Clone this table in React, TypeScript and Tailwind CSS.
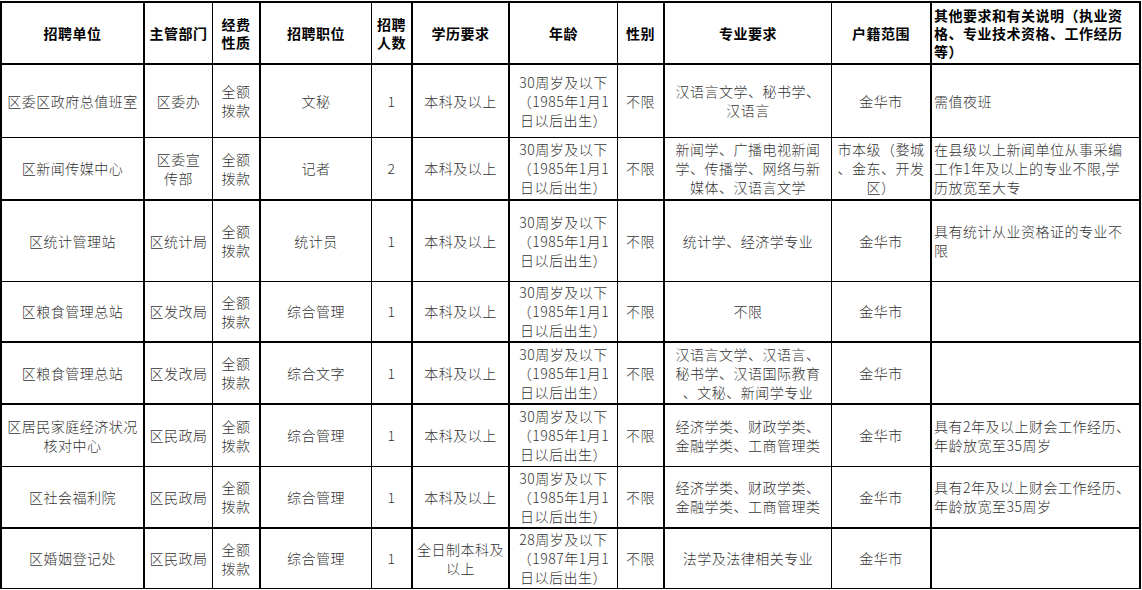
import React from "react";

// column / row border weights, taken from the sheet's grid lines
const colBorder = [
  "border-r-2",
  "border-r",
  "border-r-2",
  "border-r",
  "border-r-2",
  "border-r-2",
  "border-r",
  "border-r-2",
  "border-r",
  "border-r-2",
  "border-r-2",
];
const rowBorder = [
  "border-b-2",
  "border-b",
  "border-b-2",
  "border-b",
  "border-b-2",
  "border-b-2",
  "border-b",
  "border-b-2",
  "border-b",
];

const headers = [
  "招聘单位",
  "主管部门",
  "经费\n性质",
  "招聘职位",
  "招聘\n人数",
  "学历要求",
  "年龄",
  "性别",
  "专业要求",
  "户籍范围",
  "其他要求和有关说明（执业资\n格、专业技术资格、工作经历\n等）",
];

const age85 = "30周岁及以下\n（1985年1月1\n日以后出生）";
const funding = "全额\n拨款";

const rows: string[][] = [
  ["区委区政府总值班室", "区委办", funding, "文秘", "1", "本科及以上", age85, "不限", "汉语言文学、秘书学、\n汉语言", "金华市", "需值夜班"],
  [
    "区新闻传媒中心",
    "区委宣\n传部",
    funding,
    "记者",
    "2",
    "本科及以上",
    age85,
    "不限",
    "新闻学、广播电视新闻\n学、传播学、网络与新\n媒体、汉语言文学",
    "市本级（婺城\n、金东、开发\n区）",
    "在县级以上新闻单位从事采编\n工作1年及以上的专业不限,学\n历放宽至大专",
  ],
  ["区统计管理站", "区统计局", funding, "统计员", "1", "本科及以上", age85, "不限", "统计学、经济学专业", "金华市", "具有统计从业资格证的专业不\n限"],
  ["区粮食管理总站", "区发改局", funding, "综合管理", "1", "本科及以上", age85, "不限", "不限", "金华市", ""],
  ["区粮食管理总站", "区发改局", funding, "综合文字", "1", "本科及以上", age85, "不限", "汉语言文学、汉语言、\n秘书学、汉语国际教育\n、文秘、新闻学专业", "金华市", ""],
  ["区居民家庭经济状况\n核对中心", "区民政局", funding, "综合管理", "1", "本科及以上", age85, "不限", "经济学类、财政学类、\n金融学类、工商管理类", "金华市", "具有2年及以上财会工作经历、\n年龄放宽至35周岁"],
  ["区社会福利院", "区民政局", funding, "综合管理", "1", "本科及以上", age85, "不限", "经济学类、财政学类、\n金融学类、工商管理类", "金华市", "具有2年及以上财会工作经历、\n年龄放宽至35周岁"],
  ["区婚姻登记处", "区民政局", funding, "综合管理", "1", "全日制本科及\n以上", "28周岁及以下\n（1987年1月1\n日以后出生）", "不限", "法学及法律相关专业", "金华市", ""],
];

function Cell({ text, col, row, head }: { text: string; col: number; row: number; head?: boolean }) {
  const last = col === 10;
  return (
    <div
      className={`flex items-center border-black overflow-hidden ${colBorder[col]} ${rowBorder[row]} ${
        last ? "justify-start text-left pl-[2px]" : "justify-center text-center"
      }`}
    >
      <span
        className={`whitespace-pre ${
          head ? "font-bold text-black leading-[18px]" : "font-light text-[#333] leading-[19px]"
        }`}
      >
        {text}
      </span>
    </div>
  );
}

export default function App() {
  return (
    <div className="w-[1142px] h-[590px] bg-white overflow-hidden">
      <div
        className="mt-[1px] w-[1141px] grid grid-cols-[143px_68px_48px_111px_41px_97px_108px_47px_167px_100px_209px] grid-rows-[62px_73px_63px_81px_61px_62px_62px_62px_60px] border-l-2 border-t-2 border-black text-[14px] tracking-[0.5px]"
        style={{ fontFamily: '"Noto Sans CJK SC", "Noto Sans", sans-serif' }}
      >
        {headers.map((h, i) => (
          <Cell key={"h" + i} text={h} col={i} row={0} head />
        ))}
        {rows.map((r, ri) =>
          r.map((c, ci) => <Cell key={ri + "-" + ci} text={c} col={ci} row={ri + 1} />)
        )}
      </div>
    </div>
  );
}
